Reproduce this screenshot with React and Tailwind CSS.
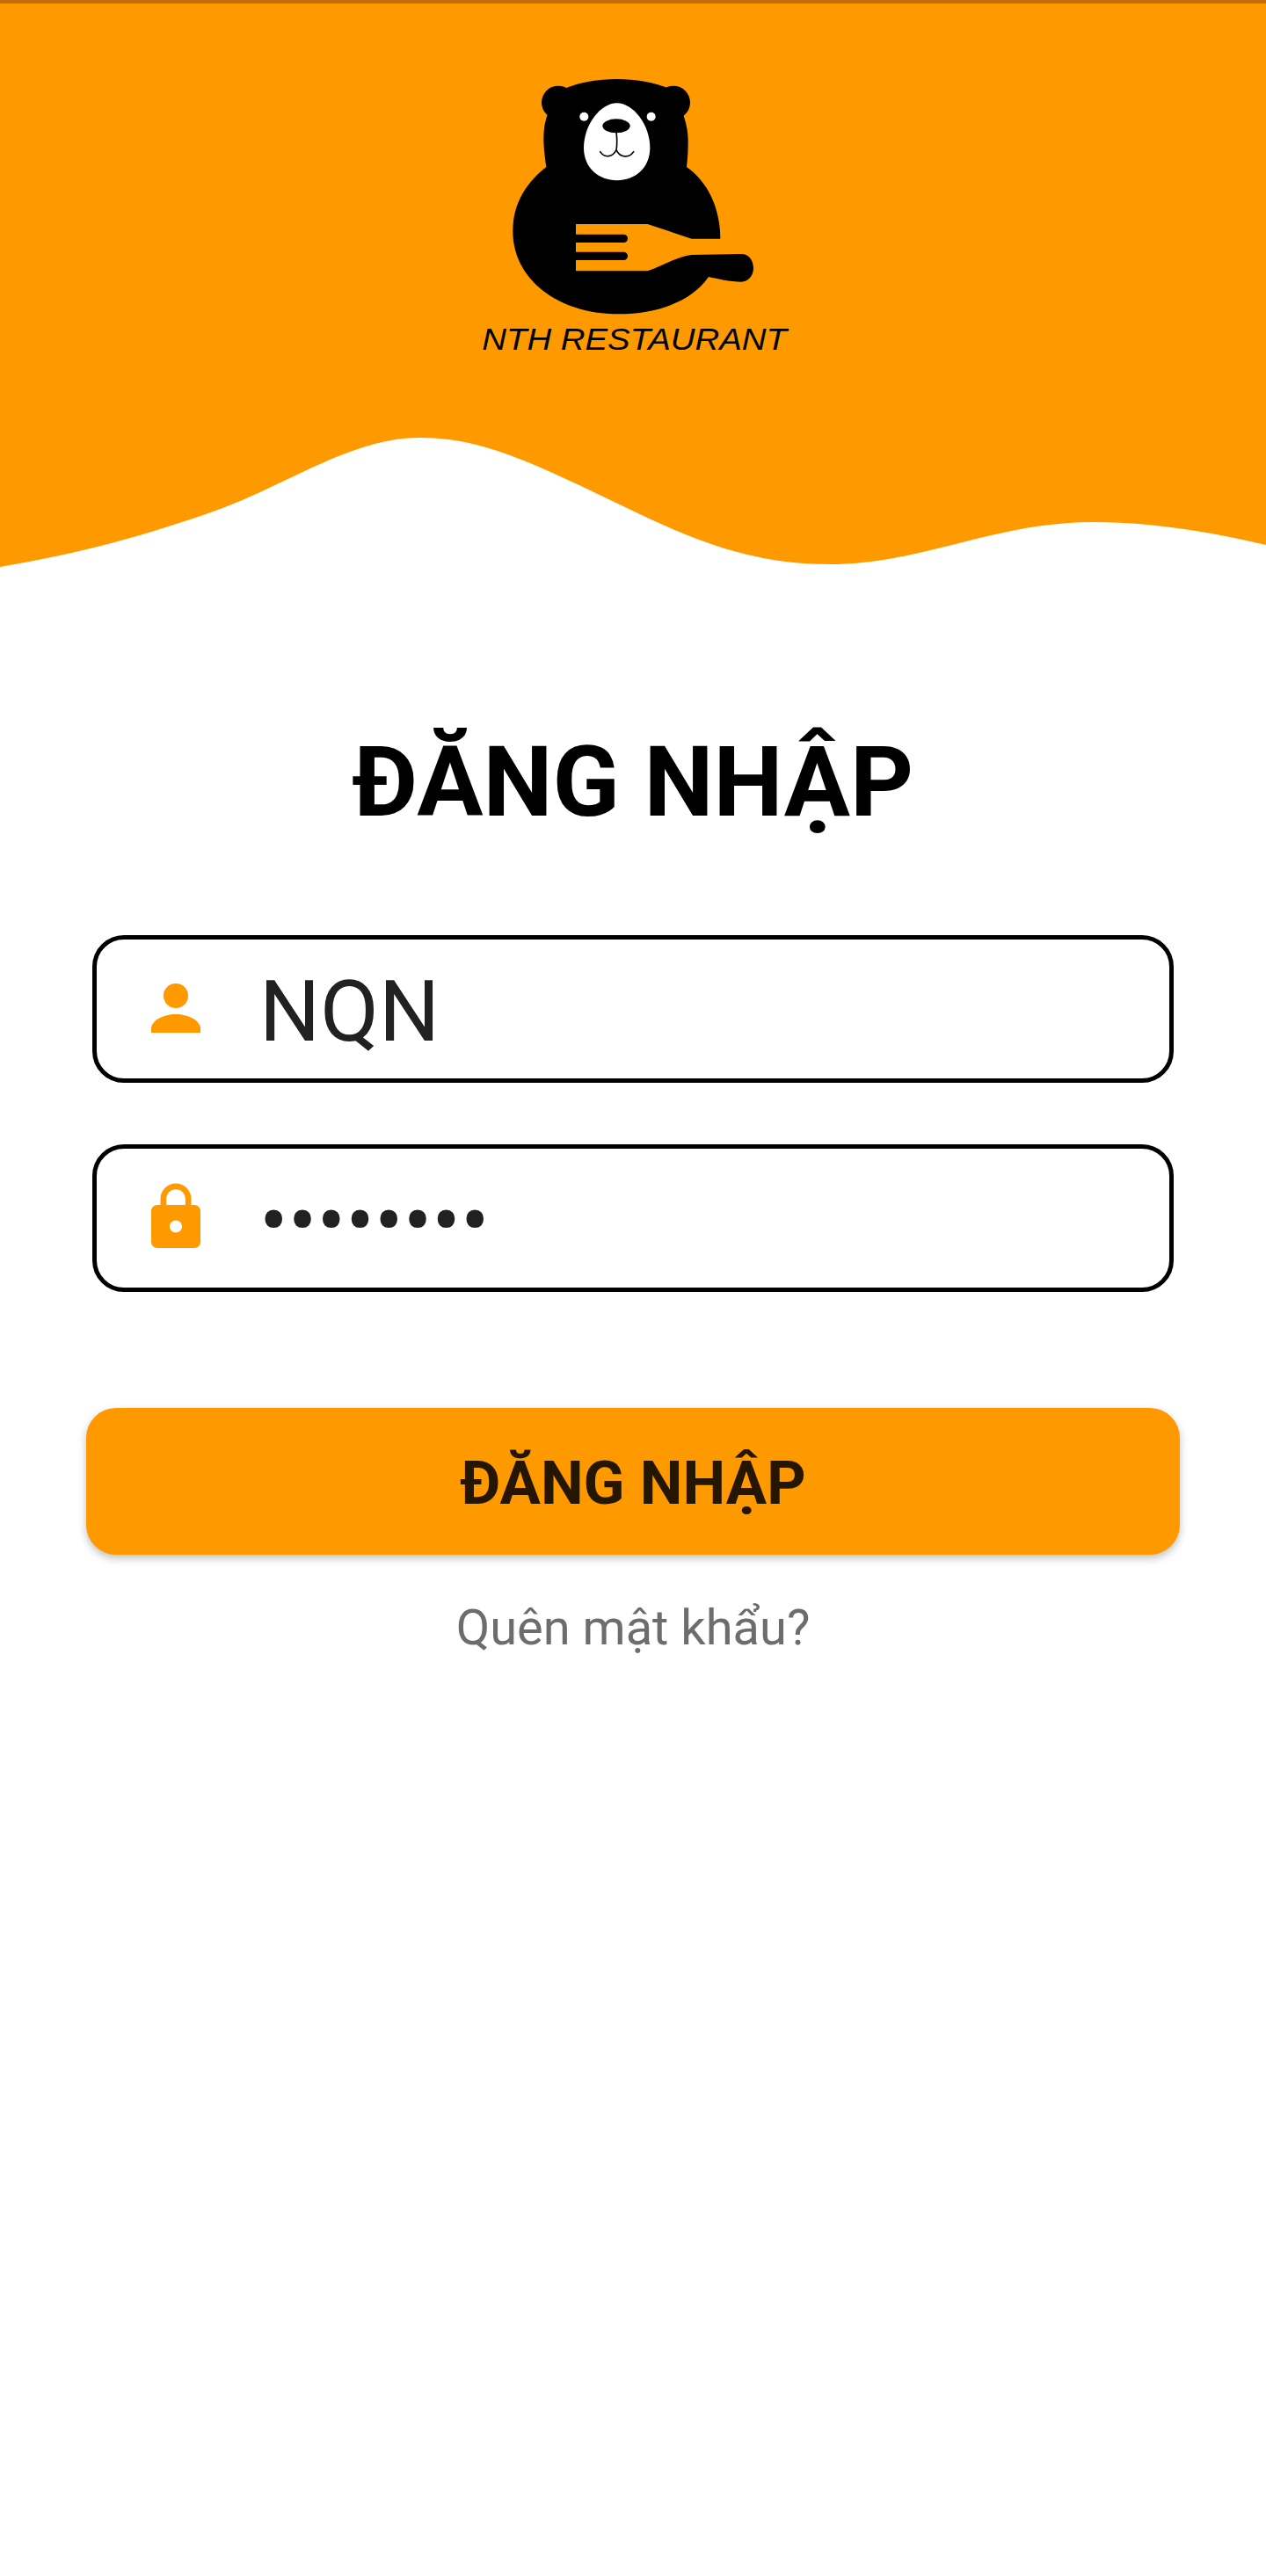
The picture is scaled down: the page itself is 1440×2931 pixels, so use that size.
function BearLogo() {
  return (
    <svg width="440" height="360" viewBox="0 0 1320 1080" className="block">
      {/* ears */}
      <circle cx="405" cy="170" r="57" fill="#000" />
      <circle cx="798" cy="170" r="57" fill="#000" />
      {/* body, the fork is left open */}
      <path
        fill="#000"
        d="M420 125 C 480 100 540 90 604 90 C 670 90 730 100 790 125 C 830 190 848 250 848 300 C 848 340 846 365 843 390 C 915 440 958 530 958 635 L 860 635 L 710 585 L 465 585 L 465 745 L 710 745 C 770 722 815 695 860 690 L 1030 687 C 1056 687 1071 710 1071 735 C 1071 762 1052 782 1030 782 C 990 782 950 772 918 765 C 860 850 740 892 610 892 C 400 892 250 770 250 610 C 250 510 300 440 364 390 C 358 350 355 320 355 290 C 355 230 375 175 420 125 Z"
      />
      {/* fork slots */}
      <path fill="#000" d="M460 620 H628 A14 14 0 0 1 642 634 A14 14 0 0 1 628 648 H460 Z" />
      <path fill="#000" d="M460 680 H628 A14 14 0 0 1 642 694 A14 14 0 0 1 628 708 H460 Z" />
      {/* face */}
      <circle cx="493" cy="218" r="15" fill="#fff" />
      <circle cx="722" cy="218" r="15" fill="#fff" />
      <path
        fill="#fff"
        d="M605 172 C 660 172 718 245 718 325 C 718 395 665 436 605 436 C 545 436 492 395 492 325 C 492 245 550 172 605 172 Z"
      />
      <ellipse cx="603" cy="250" rx="47" ry="24" fill="#000" />
      <path
        fill="none"
        stroke="#000"
        strokeWidth="5"
        strokeLinecap="round"
        d="M603 270 C 606 295 606 315 603 332 C 590 358 562 360 548 338 M603 332 C 616 360 648 360 662 338"
      />
      <text
        x="145"
        y="1015"
        fontFamily="'Liberation Sans', sans-serif"
        fontStyle="italic"
        fontSize="106"
        textLength="1040"
        lengthAdjust="spacingAndGlyphs"
        fill="#000"
      >
        NTH RESTAURANT
      </text>
    </svg>
  );
}

function Wave() {
  return (
    <svg width="1440" height="160" viewBox="0 0 1440 160" className="block">
      <path
        fill="#ff9900"
        d="M0 0 H1440 V130 C 1375 115 1310 104 1244 104 C 1130 104 1050 152 943 152 C 830 152 750 105 661 63 C 600 35 545 8 478 8 C 400 8 330 60 248 90 C 170 118 90 140 0 155 Z"
      />
    </svg>
  );
}

function PersonIcon() {
  return (
    <svg width="84" height="84" viewBox="0 0 24 24" fill="#ff9900" className="shrink-0 -mt-[2px]">
      <circle cx="12" cy="8" r="4" />
      <path d="M4 20 V18.7 C4 16 8 14 12 14 C16 14 20 16 20 18.7 V20 Z" />
    </svg>
  );
}

function LockIcon() {
  return (
    <svg width="84" height="84" viewBox="0 0 24 24" fill="#ff9900" className="shrink-0 -mt-[2px]">
      <path d="M18 8h-1V6c0-2.76-2.24-5-5-5S7 3.24 7 6v2H6c-1.1 0-2 .9-2 2v10c0 1.1.9 2 2 2h12c1.1 0 2-.9 2-2V10c0-1.1-.9-2-2-2zm-6 9c-1.1 0-2-.9-2-2s.9-2 2-2 2 .9 2 2-.9 2-2 2zm3.1-9H8.9V6c0-1.71 1.39-3.1 3.1-3.1 1.71 0 3.1 1.39 3.1 3.1v2z" />
    </svg>
  );
}

function Field({ icon, value, className }) {
  return (
    <div
      className={`mx-[105px] h-[168px] flex items-center pl-[48px] border-[5px] border-black rounded-[36px] bg-white ${className}`}
    >
      {icon}
      <span className="ml-[53px] pt-[7px] text-[97px] leading-none text-[#212121]">{value}</span>
    </div>
  );
}

export default function App() {
  return (
    <div className="min-h-[2931px] bg-white font-['Roboto',sans-serif]">
      <div className="h-[4px] bg-[#c66d08]" />

      {/* ================= HEADER ================= */}
      <div className="bg-[#ff9900] h-[486px] pt-[56px] flex justify-center">
        <BearLogo />
      </div>
      <Wave />

      {/* ================= FORM ================= */}
      <h1 className="mt-[174px] text-center text-[112px] leading-[132px] font-bold text-black">
        ĐĂNG NHẬP
      </h1>
      <Field className="mt-[108px]" icon={<PersonIcon />} value="NQN" />
      <Field className="mt-[70px]" icon={<LockIcon />} value="••••••••" />
      <button className="block mt-[132px] mx-[98px] w-[1244px] h-[167px] pt-[5px] rounded-[34px] bg-[#ff9900] text-[69px] font-bold text-[#241600] shadow-[0_4px_10px_rgba(0,0,0,0.25)]">
        ĐĂNG NHẬP
      </button>
      <p className="mt-[49px] text-center text-[56px] leading-[68px] text-[#6d6d6d]">Quên mật khẩu?</p>
    </div>
  );
}
